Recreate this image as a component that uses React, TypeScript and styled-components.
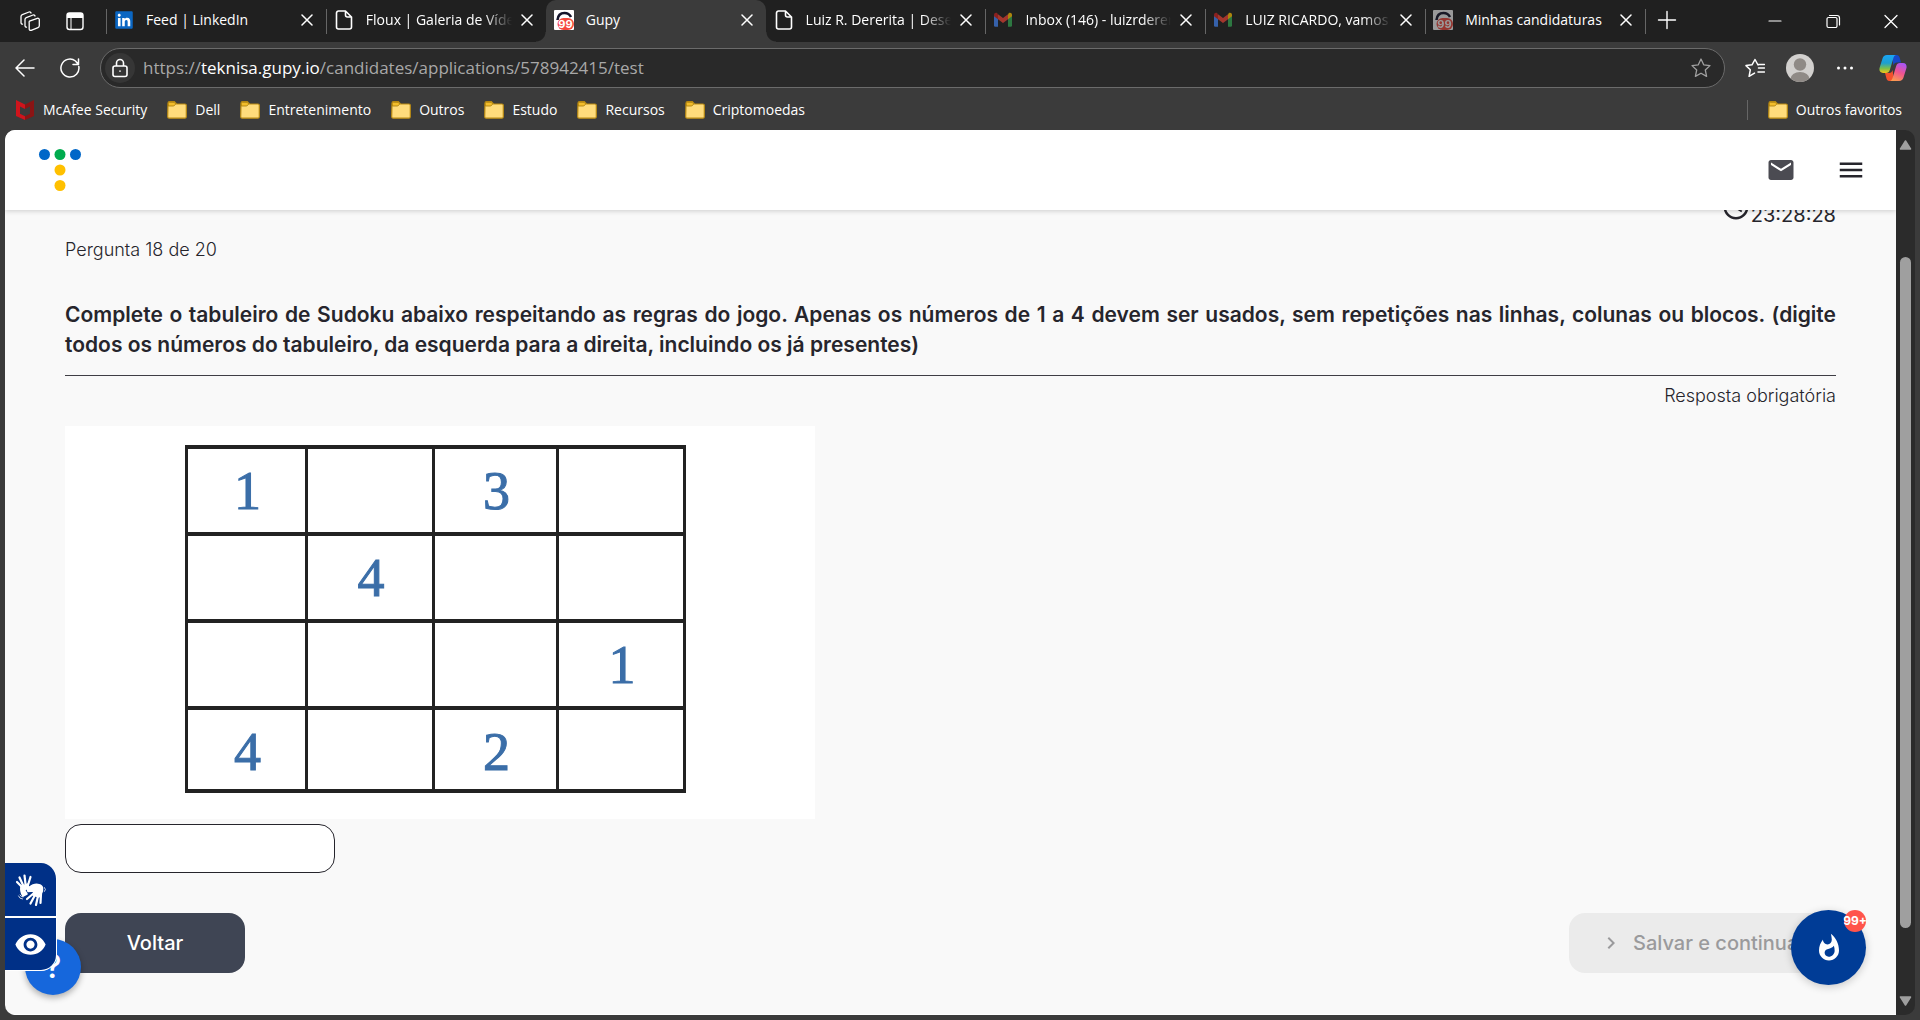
import React from "react";
import styled, { createGlobalStyle, css } from "styled-components";
import { MdAccessTime, MdMail, MdMenu, MdVisibility, MdWhatshot, MdChevronRight } from "react-icons/md";
import { FaLinkedin } from "react-icons/fa";

const GlobalStyle = createGlobalStyle`
  *, *::before, *::after { box-sizing: border-box; }
  body { margin: 0; background: #3b3b3b; overflow: hidden; }
  button, input { font: inherit; color: inherit; border: 0; padding: 0; margin: 0; background: none; }
  a { color: inherit; text-decoration: none; }
  svg { display: block; flex: none; }
`;

const Browser = styled.div`
  display: flex;
  flex-direction: column;
  height: 100vh;
  color: #fff;
  font-family: "Open Sans", "Noto Sans", sans-serif;
  font-size: 14px;
`;

const IconButton = styled.button<{ $size?: number; $round?: boolean }>`
  display: flex;
  flex: none;
  align-items: center;
  justify-content: center;
  width: ${(p) => p.$size ?? 20}px;
  height: ${(p) => p.$size ?? 20}px;
  ${(p) => p.$round && css`border-radius: 50%; background: #363636;`}
`;

/* Tab strip */
const TabStrip = styled.header`
  display: flex;
  flex: none;
  align-items: center;
  height: 42px;
  padding-right: 19px;
  background: #202020;
`;

const StripTools = styled.div`
  display: flex;
  flex: none;
  gap: 25px;
  width: 106px;
  padding-left: 20px;
`;

const Tabs = styled.nav`
  display: flex;
  flex: 0 1 1539px;
  min-width: 0;
  height: 100%;
`;

const divider = css`
  background: linear-gradient(#666, #666) 0 9px / 1px 25px no-repeat;
`;

const Tab = styled.div<{ $active?: boolean; $line?: boolean }>`
  position: relative;
  display: flex;
  flex: 1 1 0;
  align-items: center;
  gap: 12px;
  min-width: 0;
  padding: 0 12px 2px 8px;
  ${(p) => p.$line && divider}
  ${(p) => p.$active && css`
    border-radius: 10px 10px 0 0;
    background: #3b3b3b;
    &::before, &::after {
      content: "";
      position: absolute;
      bottom: 0;
      width: 10px;
      height: 10px;
    }
    &::before { right: 100%; background: radial-gradient(circle at 0 0, transparent 9px, #3b3b3b 10px); }
    &::after { left: 100%; background: radial-gradient(circle at 100% 0, transparent 9px, #3b3b3b 10px); }
  `}
`;

const TabTitle = styled.a<{ $fade?: boolean }>`
  flex: 1;
  margin-right: -4px;
  overflow: hidden;
  white-space: nowrap;
  line-height: 20px;
  ${(p) => p.$fade && css`mask-image: linear-gradient(90deg, #000 calc(100% - 28px), transparent);`}
`;

const NewTab = styled.div`
  display: flex;
  align-items: center;
  height: 100%;
  padding: 0 0 3px 12px;
  ${divider}
`;

const WindowControls = styled.div`
  display: flex;
  gap: 38px;
  margin-left: auto;
`;

/* Toolbar */
const Toolbar = styled.div`
  display: flex;
  flex: none;
  align-items: center;
  height: 50px;
  padding: 2px 10px 0 15px;
`;

const NavTools = styled.div`
  display: flex;
  gap: 25px;
  padding-right: 20px;
`;

const AddressBar = styled.div`
  display: flex;
  flex: 1;
  align-items: center;
  height: 40px;
  padding: 0 13px 0 4px;
  border: 1px solid #6b6b6b;
  border-radius: 20px;
  background: #292929;
`;

const Url = styled.div`
  flex: 1;
  padding-left: 8px;
  color: #a8a8a8;
  font-size: 17px;
  line-height: 24px;
  white-space: nowrap;
  b { color: #fff; font-weight: 400; }
`;

const ToolbarActions = styled.div`
  display: flex;
  align-items: center;
  gap: 21px;
  padding-left: 20px;
`;

/* Favourites */
const Favorites = styled.nav`
  display: flex;
  flex: none;
  align-items: center;
  gap: 20px;
  height: 38px;
  padding: 0 18px 2px 15px;
`;

const Favorite = styled.a`
  display: flex;
  align-items: center;
  gap: 8px;
  line-height: 20px;
  white-space: nowrap;
`;

const FavoriteDivider = styled.span`
  width: 1px;
  height: 20px;
  margin-left: auto;
  background: #666;
`;

/* Web page frame */
const Viewport = styled.div`
  display: flex;
  flex: 1;
  min-height: 0;
  margin: 0 5px 5px;
  overflow: hidden;
  border-radius: 10px;
  background: #2b2b2b;
`;

const Page = styled.div`
  position: relative;
  flex: 1;
  min-width: 0;
  overflow: hidden;
  border-bottom: 1px solid #fff;
  background: #f9f9f9;
  color: #26252c;
  font-family: Inter, sans-serif;
  font-size: 18px;
  line-height: 28px;
`;

const Scrollbar = styled.div`
  display: flex;
  flex: none;
  flex-direction: column;
  align-items: center;
  width: 19px;
  padding: 10px 0 9px;
`;

const ScrollTrack = styled.div`
  flex: 1;
  width: 11px;
  margin: 4px 0;
  padding: 103px 0 64px;
`;

const ScrollThumb = styled.div`
  height: 100%;
  border-radius: 6px;
  background: #9f9f9f;
`;

const SiteHeader = styled.header`
  position: relative;
  z-index: 1;
  display: flex;
  align-items: center;
  height: 80px;
  padding: 0 30px 0 32px;
  background: #fff;
  box-shadow: 0 1px 5px rgba(0, 0, 0, 0.18);
`;

const SiteActions = styled.div`
  display: flex;
  gap: 40px;
  margin-left: auto;
  color: #26252c;
  svg { width: 30px; height: 30px; }
`;

const Content = styled.main`
  display: flex;
  flex-direction: column;
  margin-top: -18px;
  padding: 0 60px;
`;

const Timer = styled.div`
  display: flex;
  justify-content: flex-end;
  font-size: 20px;
  span { padding-top: 8px; line-height: 30px; }
`;

const Progress = styled.p`
  margin: 6px 0 36px;
  font-weight: 300;
`;

const Question = styled.h1`
  margin: 0;
  padding-bottom: 15px;
  border-bottom: 1px solid #3f3e45;
  font-size: 21px;
  font-weight: 600;
  line-height: 30px;
  text-align: justify;
`;

const Required = styled.p`
  margin: 6px 0 16px;
  font-weight: 300;
  text-align: right;
`;

const Board = styled.div`
  align-self: flex-start;
  width: 750px;
  max-width: 100%;
  padding: 19px 0 26px 120px;
  background: #fff;
`;

const Sudoku = styled.table`
  table-layout: fixed;
  width: 498px;
  border-collapse: collapse;
  color: #3b6ea8;
  font-family: "Liberation Serif", serif;
  font-size: 54px;
  line-height: 56px;
  -webkit-text-stroke: 1px #3b6ea8;
  td {
    height: 87px;
    padding: 0 0 0 2px;
    border: solid #222;
    border-width: 4px 3px;
    text-align: center;
  }
  tr:last-child td { height: 83px; padding-top: 4px; }
`;

const Answer = styled.input`
  width: 270px;
  height: 49px;
  margin-top: 5px;
  padding: 0 16px;
  border: 1px solid #26252c;
  border-radius: 16px;
  background: #fff;
`;

const FormActions = styled.div`
  display: flex;
  justify-content: space-between;
  margin-top: 40px;
`;

const ActionButton = styled.button<{ $primary?: boolean }>`
  display: flex;
  align-items: center;
  justify-content: center;
  gap: 10px;
  min-width: 180px;
  height: 60px;
  padding: 0 30px;
  border-radius: 16px;
  background: ${(p) => (p.$primary ? "#3f4554" : "#ebebeb")};
  color: ${(p) => (p.$primary ? "#fff" : "#9a9a9c")};
  font-size: 20px;
  font-weight: 500;
`;

/* Floating widgets */
const HelpButton = styled.button`
  position: absolute;
  bottom: 19px;
  left: 20px;
  width: 56px;
  height: 56px;
  border-radius: 50%;
  background: #1667dc;
  box-shadow: 0 3px 6px rgba(0, 0, 0, 0.3);
  color: #fff;
  font-size: 32px;
  font-weight: 500;
`;

const Accessibility = styled.aside`
  position: absolute;
  bottom: 43px;
  left: 0;
  display: grid;
  grid-template-rows: 53px 52px;
  gap: 2px;
  width: 52px;
  overflow: hidden;
  border: solid #fff;
  border-width: 0 1px 1px 0;
  border-radius: 0 16px 16px 0;
  background: #fff;
`;

const AccessButton = styled.button`
  display: flex;
  align-items: center;
  justify-content: center;
  background: #003087;
  color: #fff;
`;

const ChatButton = styled.button`
  position: absolute;
  right: 30px;
  bottom: 29px;
  display: flex;
  align-items: center;
  justify-content: center;
  width: 75px;
  height: 75px;
  border-radius: 50%;
  background: #003c96;
  box-shadow: 0 2px 8px rgba(0, 0, 0, 0.2);
  color: #fff;
`;

const Badge = styled.span`
  position: absolute;
  top: 0;
  right: 0;
  display: flex;
  justify-content: center;
  width: 22px;
  height: 22px;
  border-radius: 50%;
  background: #ff544b;
  font-size: 12px;
  font-weight: 700;
  line-height: 21px;
`;

/* Icons */
const Line = ({ d, w = 20, s = 1.4, color = "#fff", view = "0 0 20 20" }: { d: string; w?: number; s?: number; color?: string; view?: string }) => (
  <svg width={w} height={w} viewBox={view} fill="none" stroke={color} strokeWidth={s} strokeLinecap="round" strokeLinejoin="round">
    <path d={d} />
  </svg>
);

const STAR = "M10 1 L12.7 6.8 L19 7.6 L14.3 12 L15.6 18.4 L10 15.2 L4.4 18.4 L5.7 12 L1 7.6 L7.3 6.8Z";

const CloseIcon = () => <Line w={12} view="0 0 12 12" s={1.5} d="M1 1l10 10M11 1L1 11" />;

const FileIcon = () => <Line s={1.6} d="M4.5 1h7l6 6v10a2 2 0 0 1-2 2h-11a2 2 0 0 1-2-2V3a2 2 0 0 1 2-2zM11.500 1v4a2 2 0 0 0 2 2h4" />;

const LinkedInIcon = () => (
  <svg width="20" height="20" viewBox="0 0 20 20">
    <rect x="3" y="3" width="14" height="14" fill="#fff" />
    <FaLinkedin size={20} color="#0a66c2" />
  </svg>
);

const GupyIcon = ({ dim }: { dim?: boolean }) => (
  <svg width="20" height="20" viewBox="0 0 20 20" opacity={dim ? 0.55 : 1}>
    <rect width="20" height="20" rx="1" fill="#fff" />
    <path d="M3.500 10C4 4.800 7 3 10.500 3S16 5 17 7" fill="none" stroke="#14142b" strokeWidth="2.600" />
    <rect x="3.500" y="8" width="16.500" height="12" rx="6" fill="#f5483e" />
    <text x="11.500" y="18" textAnchor="middle" fontSize="11" fontWeight="700" fontFamily="Inter, sans-serif" fill="#fff">99</text>
  </svg>
);

const GmailIcon = () => (
  <svg width="20" height="20" viewBox="0 0 20 20" opacity="0.65">
    <path fill="#4285f4" d="M1 5v10.500a1.300 1.300 0 0 0 1.300 1.300H5V8z" />
    <path fill="#34a853" d="M19 5v10.500a1.300 1.300 0 0 1-1.300 1.300H15V8z" />
    <path fill="#fbbc04" d="M15 4.500V9.300l4-3V4.800c0-1.800-2-2.500-3.300-1.500z" />
    <path fill="#c5221f" d="M1 4.800v1.500l4 3V4.500l-.7-1.200C3 2.300 1 3 1 4.800z" />
    <path fill="#ea4335" d="M5 9.300V4.200l5 3.800 5-3.800v5.100L10 13z" />
  </svg>
);

const FolderIcon = () => (
  <svg width="20" height="20" viewBox="0 0 20 20">
    <path d="M1 3.200A1.500 1.500 0 0 1 2.500 1.700h4.800L9.500 4H18a1.300 1.300 0 0 1 1.300 1.300v11.400A1.500 1.500 0 0 1 17.800 18.200H2.200A1.500 1.500 0 0 1 .7 16.700z" fill="#ffdc7c" stroke="#b98a12" strokeWidth="1.200" />
    <path d="M1.300 3.300a1 1 0 0 1 1-1h4.800l1.700 1.700-2 2H1.300z" fill="#f3bd2b" stroke="#a67a08" strokeWidth="0.800" />
  </svg>
);

const McAfeeIcon = () => (
  <svg width="20" height="22" viewBox="0 0 20 22">
    <path fill="#d0141c" d="M1 1l9 4.500V10L5 7.600v7.200l5 2.400V21l-9-4z" />
    <path fill="#8b1414" d="M19 1l-9 4.500V10l5-2.400v7.200l-5 2.400V21l9-4z" />
  </svg>
);

const AvatarIcon = () => (
  <svg width="28" height="28" viewBox="0 0 28 28">
    <clipPath id="avatar"><circle cx="14" cy="14" r="14" /></clipPath>
    <g clipPath="url(#avatar)">
      <rect width="28" height="28" fill="#d2d0ce" />
      <circle cx="14" cy="10.500" r="6.200" fill="#8f8a86" />
      <ellipse cx="14" cy="25" rx="9.500" ry="7" fill="#8f8a86" />
    </g>
  </svg>
);

const CopilotIcon = () => (
  <svg width="28" height="28" viewBox="0 0 28 28">
    <defs>
      <linearGradient id="cool" x1="0" y1="0" x2="0" y2="1">
        <stop offset="0" stopColor="#1aa5f5" /><stop offset=".45" stopColor="#1d9fd0" /><stop offset=".75" stopColor="#7dc04a" /><stop offset="1" stopColor="#f5c518" />
      </linearGradient>
      <linearGradient id="warm" x1=".7" y1="0" x2=".3" y2="1">
        <stop offset="0" stopColor="#a855f7" /><stop offset=".5" stopColor="#f0548f" /><stop offset="1" stopColor="#fb9b50" />
      </linearGradient>
    </defs>
    <path fill="#1748c8" d="M13 1h4.500c2.200 0 2.800 1.500 3.400 3.500l1.100 4h-4c-2 0-3 1-3.600 3z" />
    <path fill="#f4512c" d="M15 27h-4.500c-2.200 0-2.800-1.500-3.300-3.500L6 19h4c2 0 3-1 3.600-3z" />
    <path fill="url(#cool)" d="M8 1h9c-1.700.4-2.300 2-2.800 3.700l-3.300 11C10.200 18 9 19 7 19H4c-3 0-4.200-2.500-3.300-5.500L3.500 4.500C4.200 2.300 5.500 1 8 1z" />
    <path fill="url(#warm)" d="M20 27h-9c1.700-.4 2.300-2 2.800-3.700l3.300-11C17.800 10 19 9 21 9h3c3 0 4.200 2.500 3.300 5.500l-2.800 9C23.800 25.700 22.500 27 20 27z" />
  </svg>
);

const TeknisaLogo = () => (
  <svg width="48" height="48" viewBox="0 0 48 48" role="img" aria-label="Teknisa">
    <circle cx="7.500" cy="8.500" r="5.500" fill="#0067c8" />
    <circle cx="23" cy="8.500" r="5.500" fill="#00ab4e" />
    <circle cx="38.500" cy="8.500" r="5.500" fill="#0067c8" />
    <circle cx="23" cy="24" r="5.500" fill="#ffc000" />
    <circle cx="23" cy="39.500" r="5.500" fill="#ffc000" />
  </svg>
);

const HandsIcon = () => (
  <svg width="32" height="32" viewBox="0 0 32 32" fill="none" stroke="#fff" strokeLinecap="round" strokeLinejoin="round">
    <path strokeWidth="2.200" d="M7 13L2 8M8 11L4.500 3.500M10.500 10L9.500 1.500M13 11L15.500 3" />
    <path fill="#fff" strokeWidth="1.500" d="M6 12.500l7-2.500.5 3.500-4 2.500 2.500 4-4 2.200C6 20 5.500 15 6 12.500z" />
    <path fill="#fff" strokeWidth="1.500" d="M12 14.500l6-3.500c4-1.500 9-.5 9.500 3 .4 3-1.500 7.500-3.500 9l-6-2 1-4-6 .5z" />
    <path strokeWidth="2.200" d="M19 19l-7 6M20 21l-4.500 8.500M23 22l-2 9M26 20l-.5 9" />
    <path strokeWidth=".8" d="M29.500 13.500q2 2 0 4M3.500 22q1 3 4 3M5 21q1 2 3 2" />
  </svg>
);

const Triangle = ({ down }: { down?: boolean }) => (
  <svg width="13" height="10" viewBox="0 0 13 10">
    <path d={down ? "M1.500 1h10L6.500 9z" : "M1.500 9h10L6.500 1z"} fill="#9f9f9f" stroke="#9f9f9f" strokeWidth="1.500" strokeLinejoin="round" />
  </svg>
);

const tabs = [
  { title: "Feed | LinkedIn", icon: <LinkedInIcon />, line: true },
  { title: "Floux | Galeria de Vídeos", icon: <FileIcon />, line: true, fade: true },
  { title: "Gupy", icon: <GupyIcon />, active: true },
  { title: "Luiz R. Dererita | Desen", icon: <FileIcon />, fade: true },
  { title: "Inbox (146) - luizrderer", icon: <GmailIcon />, line: true, fade: true },
  { title: "LUIZ RICARDO, vamos", icon: <GmailIcon />, line: true, fade: true },
  { title: "Minhas candidaturas", icon: <GupyIcon dim />, line: true },
];

const folders = ["Dell", "Entretenimento", "Outros", "Estudo", "Recursos", "Criptomoedas"];

const board = [
  ["1", "", "3", ""],
  ["", "4", "", ""],
  ["", "", "", "1"],
  ["4", "", "2", ""],
];

export default function App() {
  return (
    <Browser>
      <GlobalStyle />
      <TabStrip>
        <StripTools>
          <IconButton aria-label="Workspaces">
            <Line s={1.300} d="M9.500 10.200l7.800-2.900a1.500 1.500 0 0 1 2 1.400v6a2 2 0 0 1-1.300 1.900l-6.800 2.700a1.500 1.500 0 0 1-2-1.400v-6a2 2 0 0 1 .3-1.700zM6.500 16.200A1.500 1.500 0 0 1 5 14.700V8.500a2 2 0 0 1 1.300-1.900L13 4a1.500 1.500 0 0 1 2 1M2.500 13.200A1.500 1.500 0 0 1 1 11.700V5.500a2 2 0 0 1 1.300-1.900L9 1a1.500 1.500 0 0 1 2 1" />
          </IconButton>
          <IconButton aria-label="Tab actions">
            <svg width="20" height="20" viewBox="0 0 20 20"><rect x="2" y="2" width="16" height="16.500" rx="2.500" fill="none" stroke="#fff" strokeWidth="1.400" /><path d="M2 7V4a2 2 0 0 1 2-2h12a2 2 0 0 1 2 2v3zM5.500 7h1v11h-1z" fill="#fff" /></svg>
          </IconButton>
        </StripTools>
        <Tabs aria-label="Tabs">
          {tabs.map((t) => (
            <Tab key={t.title} $active={t.active} $line={t.line}>
              {t.icon}
              <TabTitle href="#" $fade={t.fade}>{t.title}</TabTitle>
              <IconButton $size={14} aria-label="Close tab"><CloseIcon /></IconButton>
            </Tab>
          ))}
        </Tabs>
        <NewTab>
          <IconButton aria-label="New tab"><Line d="M10 1.500v17M1.500 10h17" /></IconButton>
        </NewTab>
        <WindowControls>
          <IconButton aria-label="Minimize"><Line s={1.200} d="M4 10h12" /></IconButton>
          <IconButton aria-label="Restore"><Line s={1.200} d="M5.500 6.500h7a1.500 1.500 0 0 1 1.500 1.500v7a1.500 1.500 0 0 1-1.500 1.500h-7A1.500 1.500 0 0 1 4 15V8a1.500 1.500 0 0 1 1.500-1.500zM6.500 4.500h7.500a2.500 2.500 0 0 1 2.500 2.500v7" /></IconButton>
          <IconButton aria-label="Close window"><Line s={1.300} d="M4 4.500l12 12M16 4.500l-12 12" /></IconButton>
        </WindowControls>
      </TabStrip>

      <Toolbar>
        <NavTools>
          <IconButton aria-label="Back"><Line s={1.500} d="M19 10H1M9 2L1 10l8 8" /></IconButton>
          <IconButton aria-label="Reload"><Line s={1.500} d="M18.800 8.500A9 9 0 1 1 15.500 3L18 6M18.500 1v5.500H13" /></IconButton>
        </NavTools>
        <AddressBar>
          <IconButton $size={30} $round aria-label="Site information">
            <Line s={1.600} d="M5 8h10a2 2 0 0 1 2 2v6.500a2 2 0 0 1-2 2H5a2 2 0 0 1-2-2V10a2 2 0 0 1 2-2zM6.500 8V5a3.500 3.500 0 0 1 7 0v3M10 13v.3" />
          </IconButton>
          <Url role="textbox" aria-label="Address">https://<b>teknisa.gupy.io</b>/candidates/applications/578942415/test</Url>
          <IconButton aria-label="Add to favorites"><Line s={1.300} color="#a0a0a0" d={STAR} /></IconButton>
        </AddressBar>
        <ToolbarActions>
          <IconButton aria-label="Favorites"><Line s={1.500} d="M13 7L10 1.500 7 6.800 1 7.600l4.300 4.200-1.200 6.500 5.400-3.200M13.500 10H19.500M13 14h6.500M13.500 6.500h6" /></IconButton>
          <IconButton $size={28} aria-label="Profile"><AvatarIcon /></IconButton>
          <IconButton aria-label="Settings"><svg width="20" height="20" viewBox="0 0 20 20" fill="#fff"><circle cx="3.500" cy="10" r="1.500" /><circle cx="10" cy="10" r="1.500" /><circle cx="16.500" cy="10" r="1.500" /></svg></IconButton>
          <IconButton $size={34} aria-label="Copilot"><CopilotIcon /></IconButton>
        </ToolbarActions>
      </Toolbar>

      <Favorites aria-label="Favorites bar">
        <Favorite href="#"><McAfeeIcon />McAfee Security</Favorite>
        {folders.map((f) => <Favorite href="#" key={f}><FolderIcon />{f}</Favorite>)}
        <FavoriteDivider />
        <Favorite href="#"><FolderIcon />Outros favoritos</Favorite>
      </Favorites>

      <Viewport>
        <Page>
          <SiteHeader>
            <TeknisaLogo />
            <SiteActions>
              <IconButton $size={30} aria-label="Mensagens"><MdMail color="#4b4b52" /></IconButton>
              <IconButton $size={30} aria-label="Menu"><MdMenu /></IconButton>
            </SiteActions>
          </SiteHeader>
          <Content>
            <Timer><MdAccessTime size={30} /><span>23:28:28</span></Timer>
            <Progress>Pergunta 18 de 20</Progress>
            <Question id="question">
              Complete o tabuleiro de Sudoku abaixo respeitando as regras do jogo. Apenas os números de 1 a 4 devem ser usados, sem repetições nas linhas, colunas ou blocos. (digite todos os números do tabuleiro, da esquerda para a direita, incluindo os já presentes)
            </Question>
            <Required>Resposta obrigatória</Required>
            <Board>
              <Sudoku>
                <colgroup><col width="120" /><col width="127" /><col width="124" /><col width="127" /></colgroup>
                <tbody>
                  {board.map((row, r) => (
                    <tr key={r}>{row.map((cell, c) => <td key={c}>{cell}</td>)}</tr>
                  ))}
                </tbody>
              </Sudoku>
            </Board>
            <Answer type="text" aria-labelledby="question" />
            <FormActions>
              <ActionButton $primary>Voltar</ActionButton>
              <ActionButton disabled><MdChevronRight size={24} />Salvar e continuar</ActionButton>
            </FormActions>
          </Content>
          <HelpButton aria-label="Ajuda">?</HelpButton>
          <Accessibility aria-label="Acessibilidade">
            <AccessButton aria-label="Libras"><HandsIcon /></AccessButton>
            <AccessButton aria-label="Recursos visuais"><MdVisibility size={33} /></AccessButton>
          </Accessibility>
          <ChatButton aria-label="Notificações"><MdWhatshot size={30} /><Badge>99+</Badge></ChatButton>
        </Page>
        <Scrollbar aria-hidden="true">
          <Triangle />
          <ScrollTrack><ScrollThumb /></ScrollTrack>
          <Triangle down />
        </Scrollbar>
      </Viewport>
    </Browser>
  );
}
